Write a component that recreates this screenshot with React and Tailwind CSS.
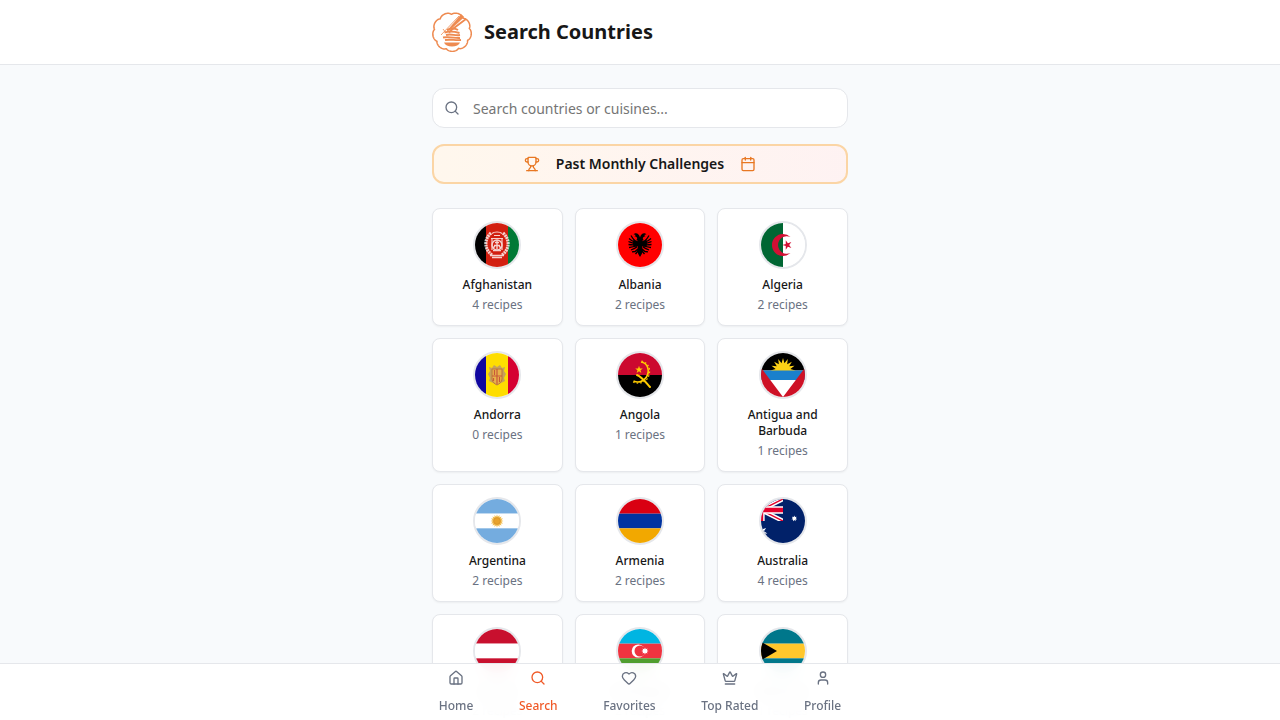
import { Calendar, Crown, Heart, House, Search, Trophy, User } from 'lucide-react';

const star = (cx, cy, outer, inner, points = 5, turn = -90) =>
  Array.from({ length: points * 2 }, (_, i) => {
    const r = i % 2 === 0 ? outer : inner;
    const a = ((turn + (i * 180) / points) * Math.PI) / 180;
    return `${(cx + r * Math.cos(a)).toFixed(2)},${(cy + r * Math.sin(a)).toFixed(2)}`;
  }).join(' ');

// rounded lobes with tight valleys between them
const scallop = Array.from({ length: 180 }, (_, i) => {
  const a = (i * 2 * Math.PI) / 180;
  const r = 17.2 + 2.2 * Math.sqrt(Math.abs(Math.sin(4.5 * a + 0.9)));
  return `${(20 + r * Math.cos(a)).toFixed(2)},${(20 + r * Math.sin(a)).toFixed(2)}`;
}).join(' ');

const Vertical = ({ colors }) =>
  colors.map((c, i) => (
    <rect key={i} x={[0, 11, 33][i]} width={[11, 22, 11][i]} height="44" fill={c} />
  ));

const Horizontal = ({ colors }) =>
  colors.map((c, i) => (
    <rect key={i} y={[0, 14.67, 29.33][i]} width="44" height="14.67" fill={c} />
  ));

const EagleHalf = () => (
  <g>
    <path d="M22 14.5c-.6-2.500-2.300-4.500-4.800-4.200l-1.700 1 2.300.6-1.300 1.300c1.600.1 2.600 1 2.700 2.300l-.7 1.500 1.500 1v6l-1 4 1.500 3.500L22 34Z" />
    <path
      d="M19 18.500c-2.500-.5-4-2.500-6-6M19 19.500c-3 0-5-1.500-8-4M19 20.500c-3 .4-5.500-.8-8.500-2M19 21.500c-3 .8-5.500.5-8.500 0M19 22.500c-2.500 1.200-5 1.500-8 2M19.500 23.500c-2 1.500-4 2.500-6.500 3.500M20 26l-3 2.500-3 .3M20 28l-2.500 3"
      fill="none"
      stroke="#000"
      strokeWidth="1.3"
    />
    <path d="M20 18c-2 .5-3.500-.5-4.500-2l-.5 4.500.5 3.500 4.500-1Z" />
  </g>
);

const flags = {
  af: (
    <>
      <Vertical colors={['#000', '#d32011', '#007a36']} />
      <g fill="none" stroke="#fff" opacity="0.8">
        <path d="M16 10c-7 6-7 16 1 22M28 10c7 6 7 16-1 22" strokeWidth="3.2" strokeDasharray="2 0.6" />
        <path d="M15 32.5h14M17 34.500h10" strokeWidth="1.5" />
        <path d="M17 16v11M27 16v11M16 15.500h12M17 10.500c2-2 8-2 10 0M19 12.500h6" strokeWidth="1.2" />
        <circle cx="22" cy="22" r="5" strokeWidth="1.4" />
        <path d="M18 27.500h8M19 22.500h6M20 19.500h4M22 17v9M18 25.500l2-3M26 25.500l-2-3" strokeWidth="1.4" />
      </g>
    </>
  ),
  al: (
    <>
      <rect width="44" height="44" fill="#f00" />
      <EagleHalf />
      <g transform="matrix(-1 0 0 1 44 0)">
        <EagleHalf />
      </g>
    </>
  ),
  dz: (
    <>
      <rect width="22" height="44" fill="#006633" />
      <rect x="22" width="22" height="44" fill="#fff" />
      <path d="M29.5 14A11 11 0 1 0 29.5 30A8.800 8.800 0 1 1 29.5 14Z" fill="#d21034" />
      <polygon points={star(26.3, 22, 5, 1.9, 5, 180)} fill="#d21034" />
    </>
  ),
  ad: (
    <>
      <Vertical colors={['#10069f', '#fedd00', '#d50032']} />
      <path d="M14 14l3 1 2-3 3 2 3-2 2 3 3-1-1 4 2 3-2 4 1 3-4 2-4 2-4-2-4-2 1-3-2-4 2-3Z" fill="#c7a15a" />
      <path d="M17 16h10v10c0 3-3 5-5 6-2-1-5-3-5-6Z" fill="#e8b24a" stroke="#b8763d" />
      <path d="M22 16v15M17 23h10M19.5 17v5M24.5 24v5M18.5 25v3" stroke="#c8593a" strokeWidth="1.2" />
    </>
  ),
  ao: (
    <>
      <rect width="44" height="22" fill="#cc092f" />
      <rect y="22" width="44" height="22" fill="#000" />
      <g fill="none" stroke="#ffcb00">
        <path d="M23 9C30 10 32 18 28.500 24c-3 5-8.500 6-13 4" strokeWidth="1.6" />
        <path d="M23.5 8C32 10 33.500 19 29.500 25.500c-4 5-10 5.500-14.500 3.500" strokeWidth="1.2" strokeDasharray="1.6 2" />
        <path d="M19 22c5 2 8.500 7 13 12" strokeWidth="2" strokeLinecap="round" />
      </g>
      <polygon points={star(21, 16.7, 4, 1.6)} fill="#ffcb00" />
    </>
  ),
  ag: (
    <>
      <rect width="44" height="17.5" fill="#000" />
      <polygon points={star(22, 17.5, 12.5, 7.5, 16)} fill="#fcd116" />
      <rect y="17.5" width="44" height="9.5" fill="#1a80cc" />
      <rect y="27" width="44" height="17" fill="#fff" />
      <path d="M-11 0 22 44H-11ZM55 0 22 44H55Z" fill="#ce1126" />
    </>
  ),
  ar: (
    <>
      <Horizontal colors={['#74acdf', '#fff', '#74acdf']} />
      <polygon points={star(22, 22, 6.5, 4.4, 16)} fill="#f3bd4e" />
      <circle cx="22" cy="22" r="3.4" fill="#e8a22c" stroke="#cf8b2b" strokeWidth="0.6" />
    </>
  ),
  am: <Horizontal colors={['#d90012', '#0033a0', '#f2a800']} />,
  au: (
    <>
      <rect width="44" height="44" fill="#012169" />
      <svg width="22" height="22" viewBox="0 0 22 22">
        <path d="M-22 0 22 22M-22 22 22 0" stroke="#fff" strokeWidth="4.4" />
        <path d="M0 11 22 22M0 11 22 0" stroke="#e4002b" strokeWidth="1.5" />
        <path d="M0 0V22M-22 11H22" stroke="#fff" strokeWidth="7.3" />
        <path d="M0 0V22M-22 11H22" stroke="#e4002b" strokeWidth="4.4" />
      </svg>
      <polygon points={star(0, 33, 6.6, 3, 7)} fill="#fff" />
      <polygon points={star(33.3, 19.5, 3, 1.6, 7)} fill="#fff" />
      <polygon points={star(44, 37, 3, 1.5, 7)} fill="#fff" />
    </>
  ),
  at: <Horizontal colors={['#c8102e', '#fff', '#c8102e']} />,
  az: (
    <>
      <Horizontal colors={['#00b5e2', '#ef3340', '#509e2f']} />
      <circle cx="20.3" cy="22" r="6.6" fill="#fff" />
      <circle cx="22" cy="22" r="5.5" fill="#ef3340" />
      <polygon points={star(27, 22, 3.6, 2, 8)} fill="#fff" />
    </>
  ),
  bs: (
    <>
      <Horizontal colors={['#00778b', '#ffc72c', '#00778b']} />
      <path d="M-22 0 16 22-22 44Z" fill="#000" />
    </>
  ),
};

const countries = [
  { code: 'af', name: 'Afghanistan', recipes: 4 },
  { code: 'al', name: 'Albania', recipes: 2 },
  { code: 'dz', name: 'Algeria', recipes: 2 },
  { code: 'ad', name: 'Andorra', recipes: 0 },
  { code: 'ao', name: 'Angola', recipes: 1 },
  { code: 'ag', name: 'Antigua and Barbuda', recipes: 1 },
  { code: 'ar', name: 'Argentina', recipes: 2 },
  { code: 'am', name: 'Armenia', recipes: 2 },
  { code: 'au', name: 'Australia', recipes: 4 },
  { code: 'at', name: 'Austria', recipes: 2 },
  { code: 'az', name: 'Azerbaijan', recipes: 2 },
  { code: 'bs', name: 'Bahamas', recipes: 1 },
];

const navItems = [
  { icon: House, label: 'Home' },
  { icon: Search, label: 'Search', active: true },
  { icon: Heart, label: 'Favorites' },
  { icon: Crown, label: 'Top Rated' },
  { icon: User, label: 'Profile' },
];

const Logo = () => (
  <svg viewBox="0 0 40 40" className="size-10 shrink-0" fill="none" stroke="#ee8a50" aria-hidden="true">
    <polygon points={scallop} strokeWidth="1.5" strokeLinejoin="round" />
    <path d="M27 4 9 23M14 21 11 17" strokeWidth="0.8" />
    <path d="M29 2.500 32 5 18 18l-3 1Z" fill="#ee8a50" strokeWidth="0.4" />
    <path d="M34 7 20 17.500l-3 3" strokeWidth="1.8" />
    <path
      d="M15 18c3-2 8-2 11 0M12.500 20.500c5-1.500 10-1 15 .5M14 23c5-1.500 9 1 14 0M11 25.500c6-1.500 12 1 17 .5M13 28c5-1 10 .5 16 0"
      strokeWidth="1.9"
    />
    <path d="M12 30.500h16c-1 2.500-4 4-8 4s-7-1.500-8-4Z" fill="#ee8a50" strokeWidth="0" />
  </svg>
);

const CountryCard = ({ country }) => (
  <button className="flex flex-col items-center rounded-lg border border-gray-200 bg-white p-3 text-center text-xs shadow-xs hover:shadow-md">
    <span className="mb-2 block size-12 overflow-hidden rounded-full border-2 border-gray-200">
      <svg viewBox="0 0 44 44" className="block size-full" aria-hidden="true">
        {flags[country.code]}
      </svg>
    </span>
    <span className="mb-1 font-medium text-[#171717]">{country.name}</span>
    <span className="text-gray-500">{country.recipes} recipes</span>
  </button>
);

const App = () => {
  return (
    <div className="min-h-screen bg-[#f8fafc] font-['Noto_Sans',sans-serif] text-[#171717]">
      <header className="border-b border-gray-200 bg-white">
        <div className="mx-auto flex h-16 max-w-md items-center gap-3 px-4">
          <Logo />
          <h1 className="text-xl font-bold">Search Countries</h1>
        </div>
      </header>

      <main className="mx-auto max-w-md px-4 pt-[23px] pb-20">
        <div className="relative mb-4">
          <Search className="absolute top-3 left-3 size-4 text-gray-500" aria-hidden="true" />
          <input
            type="text"
            aria-label="Search countries or cuisines"
            placeholder="Search countries or cuisines..."
            className="block h-10 w-full rounded-xl border border-gray-200 bg-white pr-4 pl-10 text-sm placeholder:text-[#757575]"
          />
        </div>

        <button className="mb-6 flex h-10 w-full items-center justify-center gap-4 rounded-xl border-2 border-[#fbd5a5] bg-linear-to-r from-orange-50 to-red-50 text-sm font-semibold">
          <Trophy className="size-4 text-[#e87722]" aria-hidden="true" />
          Past Monthly Challenges
          <Calendar className="size-4 text-[#e87722]" aria-hidden="true" />
        </button>

        {/* Countries */}
        <div className="grid grid-cols-3 gap-3">
          {countries.map((country) => (
            <CountryCard key={country.code} country={country} />
          ))}
        </div>
      </main>

      {/* Bottom navigation */}
      <nav className="fixed inset-x-0 bottom-0 border-t border-gray-200 bg-white/95 backdrop-blur-sm">
        <div className="mx-auto flex h-14 max-w-md items-center justify-around">
          {navItems.map(({ icon: Icon, label, active }) => (
            <a
              key={label}
              href="#"
              aria-current={active ? 'page' : undefined}
              className={`flex flex-col items-center gap-3 text-xs font-medium ${active ? 'text-[#f05a28]' : 'text-gray-500'}`}
            >
              <Icon className="size-4" aria-hidden="true" />
              {label}
            </a>
          ))}
        </div>
      </nav>
    </div>
  );
};

export default App;
